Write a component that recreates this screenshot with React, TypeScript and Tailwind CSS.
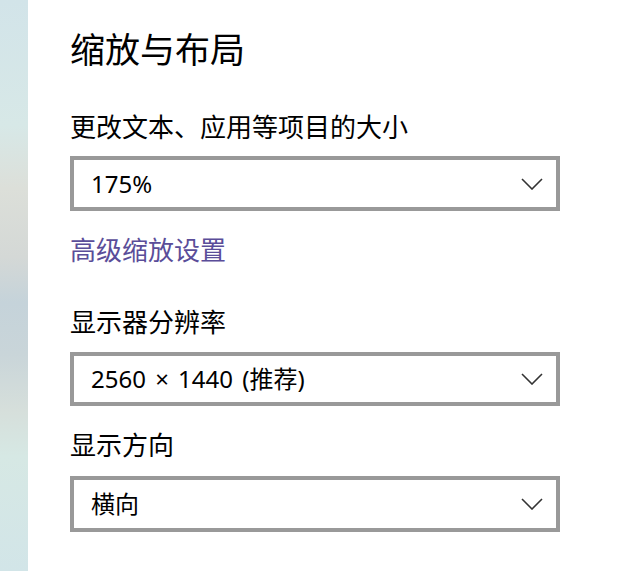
const ChevronDown = () => (
  <svg width="22" height="12" viewBox="0 0 22 12" fill="none" className="shrink-0">
    <path d="M1 1 L11 11 L21 1" stroke="#333333" strokeWidth="1.6" />
  </svg>
);

type SelectBoxProps = {
  value: string;
  className?: string;
  textClassName?: string;
};

const SelectBox = ({ value, className, textClassName }: SelectBoxProps) => {
  return (
    <div
      className={`flex w-[490px] items-center justify-between border-4 border-[#999999] bg-white pl-[17px] pr-[13px] ${className ?? ""}`}>
      <span className={`text-[24px] leading-none text-black ${textClassName ?? ""}`}>{value}</span>
      <ChevronDown />
    </div>
  );
};

export default function App() {
  return (
    <div
      className="flex h-[571px] w-[634px] overflow-hidden bg-white"
      style={{ fontFamily: '"Noto Sans", "Noto Sans CJK SC", sans-serif' }}>
      <div className="h-full w-[28px] shrink-0 bg-[linear-gradient(to_bottom,#d2e4e9_0%,#d7e8e7_22%,#dcdfd9_33%,#d4d8d6_45%,#c5d3da_53%,#c9d5d9_62%,#d6dfdb_72%,#d6e8e4_80%,#d2e5e8_100%)]" />

      <div className="flex flex-col pl-[42px] pt-[30px]">
        <h1 className="text-[35px] font-normal leading-[40px] text-black">缩放与布局</h1>

        <p className="mt-[41px] text-[26px] leading-[32px] text-black">更改文本、应用等项目的大小</p>
        <SelectBox value="175%" className="mt-[13px] h-[55px]" />

        <a className="mt-[23px] text-[26px] leading-[32px] text-[#5a4d99]" href="#">
          高级缩放设置
        </a>

        <p className="mt-[40px] text-[26px] leading-[32px] text-black">显示器分辨率</p>
        <SelectBox value="2560 × 1440 (推荐)" className="mt-[14px] h-[54px]" textClassName="[word-spacing:3px]" />

        <p className="mt-[23px] text-[26px] leading-[32px] text-black">显示方向</p>
        <SelectBox value="横向" className="mt-[15px] h-[56px]" />
      </div>
    </div>
  );
}
